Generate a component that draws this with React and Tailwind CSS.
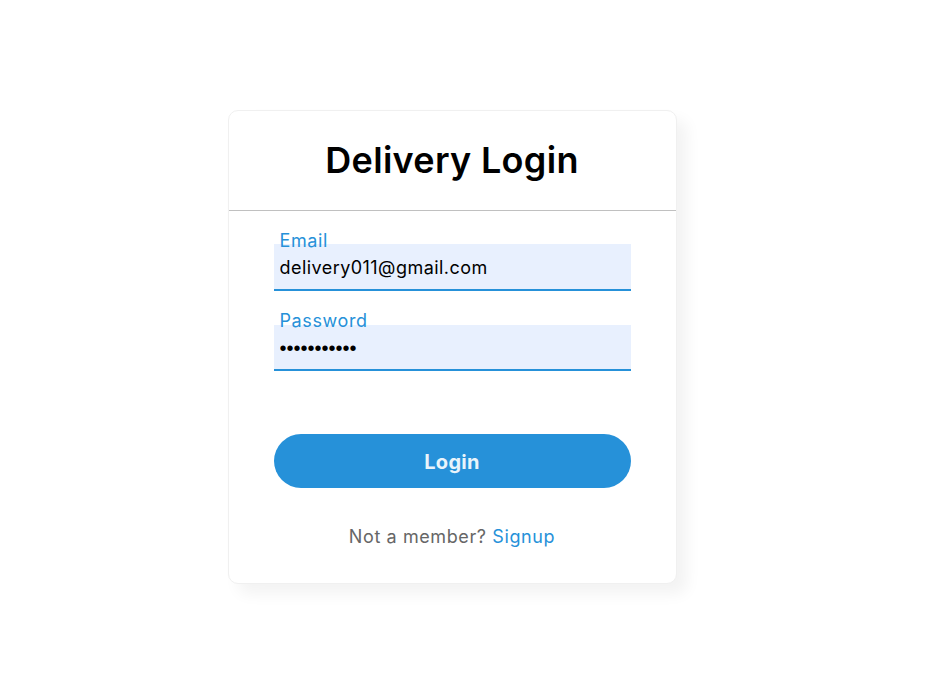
export default function App() {
  const font = { fontFamily: "Inter, 'Noto Sans', sans-serif" };
  return (
    <div
      className="min-h-screen bg-white flex items-center justify-center pr-[24px] pb-[4px]"
      style={font}
    >
      <div className="w-[449px] bg-white rounded-[10px] border border-[#f0f0f0] shadow-[10px_10px_15px_rgba(0,0,0,0.05)]">
        <div className="h-[100px] flex items-center justify-center border-b border-[#c0c0c0]">
          <h1 className="text-[36px] font-semibold tracking-[0.3px] text-black leading-none">Delivery Login</h1>
        </div>

        <form className="px-[45px] pt-[33px] pb-[34px]" onSubmit={(e) => e.preventDefault()}>
          <div className="relative">
            <label className="absolute left-[6px] top-[-12px] text-[18px] tracking-[0.6px] leading-none text-[#2691d9]">
              Email
            </label>
            <input
              type="text"
              readOnly
              value="delivery011@gmail.com"
              className="w-full h-[47px] px-[6px] pt-[2px] bg-[#e8f0fe] border-b-2 border-[#2691d9] text-[18px] tracking-[0.45px] text-black outline-none"
            />
          </div>

          <div className="relative mt-[34px]">
            <label className="absolute left-[6px] top-[-13px] text-[18px] tracking-[0.6px] leading-none text-[#2691d9]">
              Password
            </label>
            <input
              type="password"
              readOnly
              value="delivery011"
              className="w-full h-[46px] px-[6px] pt-[4px] bg-[#e8f0fe] border-b-2 border-[#2691d9] text-[20px] text-black outline-none"
              style={{ fontFamily: "'Liberation Sans', Arial, sans-serif" }}
            />
          </div>

          <button
            type="submit"
            className="mt-[63px] w-full h-[54px] pt-[2px] rounded-full bg-[#2691d9] text-[#e9f4fb] text-[20px] font-bold tracking-[0.3px]"
          >
            Login
          </button>

          <div className="mt-[37px] text-center text-[18px] tracking-[0.6px] leading-[24px] text-[#666666]">
            Not a member? <a href="#" className="text-[#2691d9]">Signup</a>
          </div>
        </form>
      </div>
    </div>
  );
}
